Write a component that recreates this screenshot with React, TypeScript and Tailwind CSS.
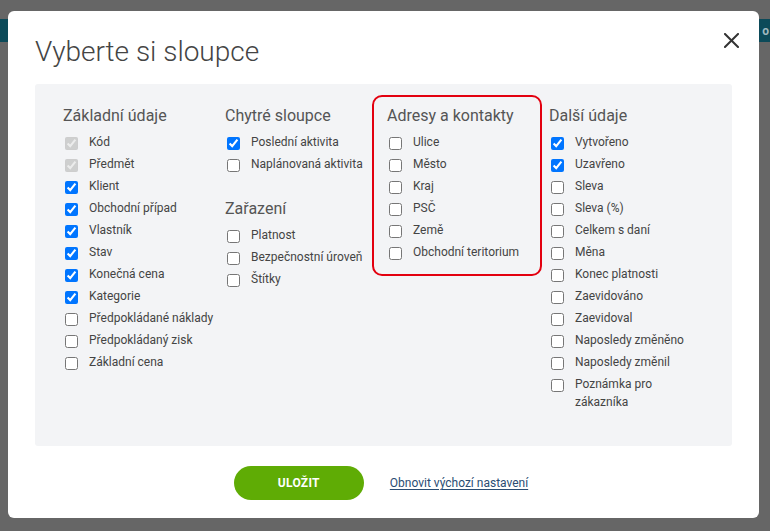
import React from "react";

type Item = { label: string; checked?: boolean; disabled?: boolean };

const col1: Item[] = [
  { label: "Kód", checked: true, disabled: true },
  { label: "Předmět", checked: true, disabled: true },
  { label: "Klient", checked: true },
  { label: "Obchodní případ", checked: true },
  { label: "Vlastník", checked: true },
  { label: "Stav", checked: true },
  { label: "Konečná cena", checked: true },
  { label: "Kategorie", checked: true },
  { label: "Předpokládané náklady" },
  { label: "Předpokládaný zisk" },
  { label: "Základní cena" },
];

const col2a: Item[] = [
  { label: "Poslední aktivita", checked: true },
  { label: "Naplánovaná aktivita" },
];

const col2b: Item[] = [
  { label: "Platnost" },
  { label: "Bezpečnostní úroveň" },
  { label: "Štítky" },
];

const col3: Item[] = [
  { label: "Ulice" },
  { label: "Město" },
  { label: "Kraj" },
  { label: "PSČ" },
  { label: "Země" },
  { label: "Obchodní teritorium" },
];

const col4: Item[] = [
  { label: "Vytvořeno", checked: true },
  { label: "Uzavřeno", checked: true },
  { label: "Sleva" },
  { label: "Sleva (%)" },
  { label: "Celkem s daní" },
  { label: "Měna" },
  { label: "Konec platnosti" },
  { label: "Zaevidováno" },
  { label: "Zaevidoval" },
  { label: "Naposledy změněno" },
  { label: "Naposledy změnil" },
  { label: "Poznámka pro zákazníka" },
];

function Heading({ children }: { children: React.ReactNode }) {
  return (
    <h3 className="text-[16px] leading-[20px] font-normal text-[#555] whitespace-nowrap">
      {children}
    </h3>
  );
}

function List({ items, narrow }: { items: Item[]; narrow?: boolean }) {
  return (
    <ul className="mt-[7px] flex flex-col gap-[4px]">
      {items.map((it) => (
        <li key={it.label}>
          <label className="flex items-start text-[12px] leading-[18px] text-[#444]">
            <input
              type="checkbox"
              defaultChecked={it.checked}
              disabled={it.disabled}
              className="m-0 mt-[4px] ml-[2px] mr-[11px] w-[13px] h-[13px] shrink-0"
            />
            <span className={narrow ? "max-w-[115px]" : "whitespace-nowrap"}>{it.label}</span>
          </label>
        </li>
      ))}
    </ul>
  );
}

export default function App() {
  return (
    <div
      className="relative w-[770px] h-[531px] overflow-hidden bg-[#666666]"
      style={{ fontFamily: "Roboto, 'Noto Sans', sans-serif" }}
    >
      <div className="mt-[19px] h-[23px] bg-[#0c4a59] flex justify-end items-center pr-[1px]">
        <span className="text-[12px] text-[#9fb8bf] font-bold">o</span>
      </div>

      <div className="absolute left-[8px] top-[11px] w-[751px] h-[507px] bg-white rounded-[6px] flex flex-col">
        <button className="absolute right-[20px] top-[21px] w-[16px] h-[16px] flex items-center justify-center">
          <svg width="15" height="15" viewBox="0 0 15 15">
            <path d="M1 1 L14 14 M14 1 L1 14" stroke="#333" strokeWidth="2" strokeLinecap="square" />
          </svg>
        </button>

        <h2 className="pt-[24px] pl-[27px] text-[28px] leading-[34px] font-light text-[#444]">
          Vyberte si sloupce
        </h2>

        <div className="mt-[15px] mx-[27px] h-[362px] bg-[#f3f4f6] rounded-[3px] pt-[22px] pl-[28px] flex">
          <div className="w-[162px]">
            <Heading>Základní údaje</Heading>
            <List items={col1} />
          </div>
          <div className="w-[162px]">
            <Heading>Chytré sloupce</Heading>
            <List items={col2a} />
            <div className="mt-[26px]">
              <Heading>Zařazení</Heading>
              <List items={col2b} />
            </div>
          </div>
          <div className="w-[162px] relative">
            <Heading>Adresy a kontakty</Heading>
            <List items={col3} />
            <div className="absolute -left-[15px] -top-[11px] w-[170px] h-[181px] border-[2.5px] border-[#e3000f] rounded-[10px] pointer-events-none" />
          </div>
          <div className="w-[162px]">
            <Heading>Další údaje</Heading>
            <List items={col4} narrow />
          </div>
        </div>

        <div className="mt-[20px] flex items-center justify-center gap-[26px] pr-[5px]">
          <button className="w-[130px] h-[34px] rounded-full bg-[#5fac05] text-white text-[12px] font-bold tracking-[0.3px]">
            ULOŽIT
          </button>
          <a href="#" className="text-[12px] text-[#2b4d73] underline underline-offset-[2px]">
            Obnovit výchozí nastavení
          </a>
        </div>
      </div>
    </div>
  );
}
